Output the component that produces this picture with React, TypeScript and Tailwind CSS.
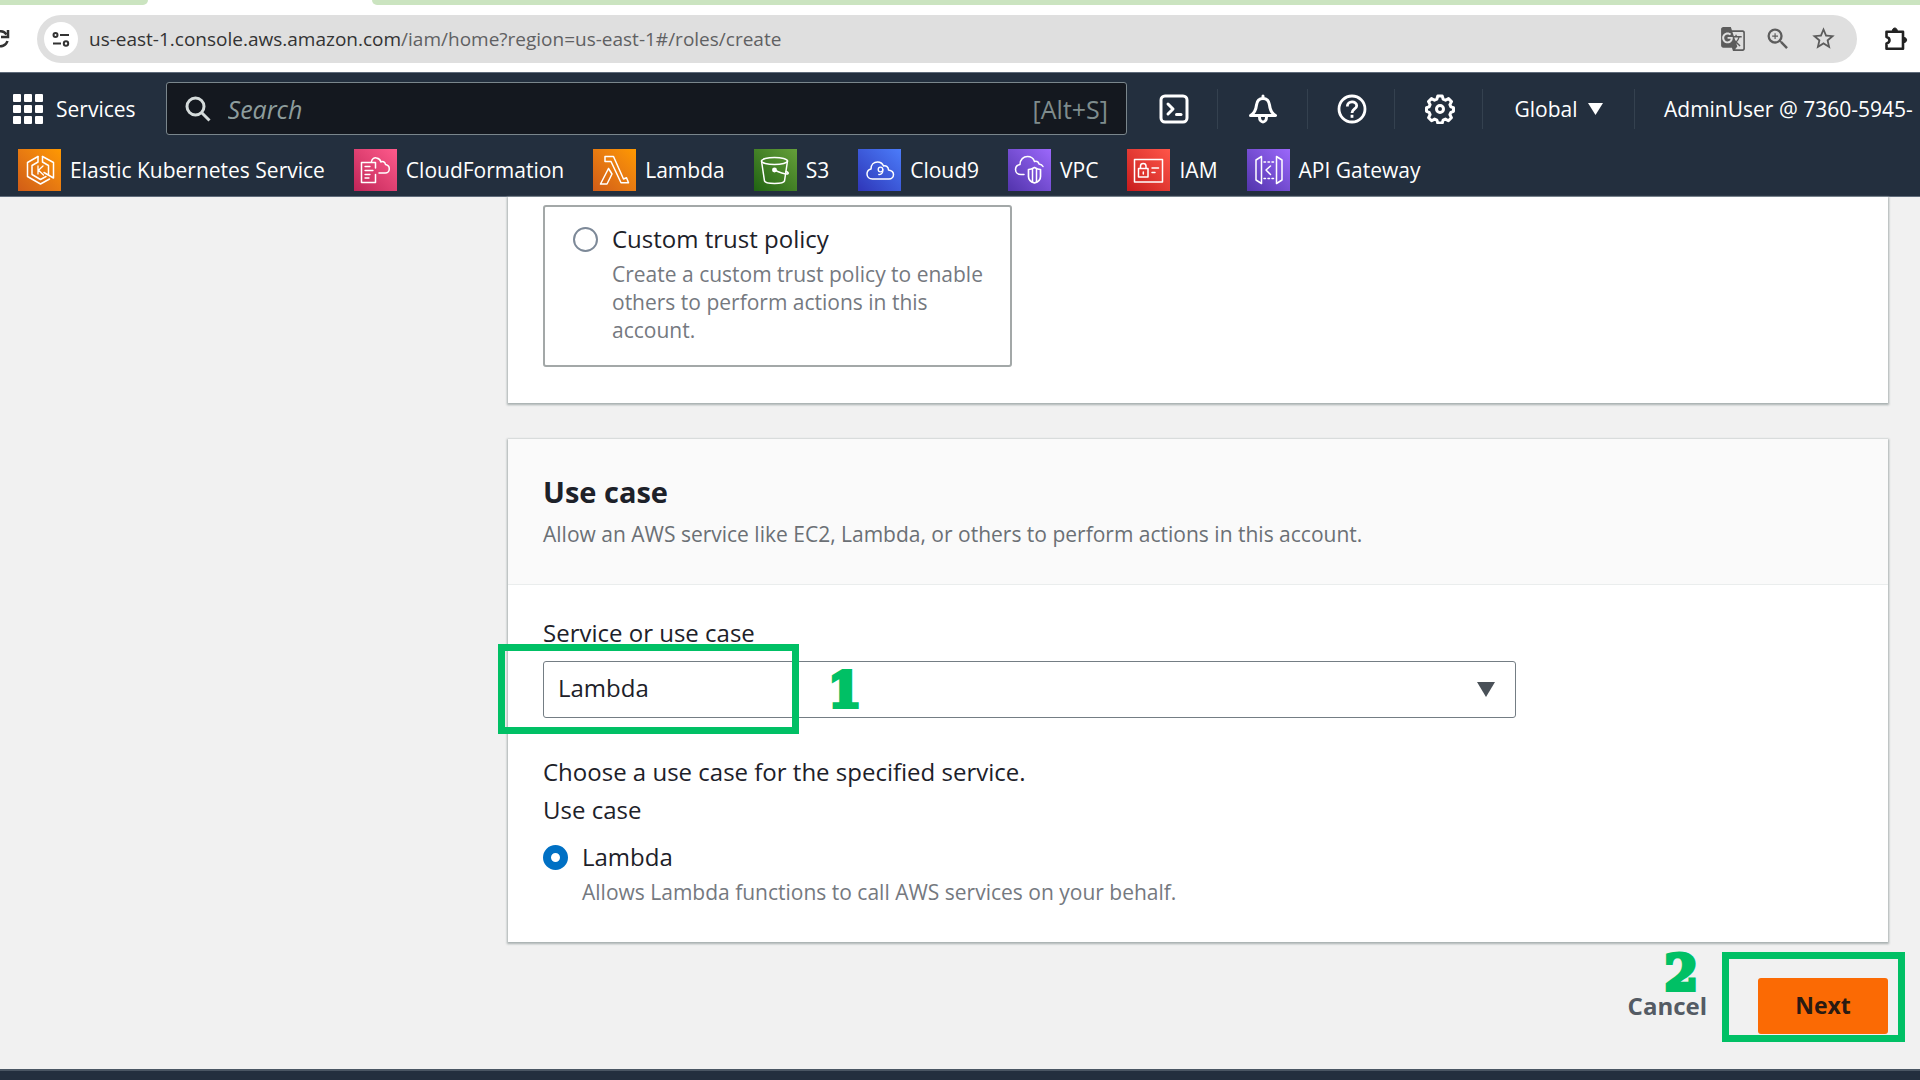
import { useState, type ReactNode } from 'react';
import { MdGTranslate, MdStarOutline, MdZoomIn } from 'react-icons/md';

function Glyph({ children }: { children: ReactNode }) {
  return (
    <svg
      viewBox="0 0 43 42"
      className="h-[42px] w-[43px]"
      fill="none"
      stroke="currentColor"
      strokeWidth="1.5"
      strokeLinejoin="round"
      strokeLinecap="round"
      aria-hidden="true"
    >
      {children}
    </svg>
  );
}

const services = [
  {
    name: 'Elastic Kubernetes Service',
    tile: 'from-[#d05c17] to-[#ff9900]',
    glyph: (
      <>
        <path d="M20 7.500 9.500 13.500v14L22.500 35l9-5" />
        <path d="M24.500 7.500 35.500 13.500v15.500L26 23.500" />
        <path d="M20 7.500v5.500l-6 3.500v9l8.500 5 5.500-3" />
        <path d="M24.500 7.500V13l6 3.500v9.500" />
        <path d="M20 17v8M25 17l-4.500 4.200L25.500 26" strokeWidth="1.300" />
      </>
    ),
  },
  {
    name: 'CloudFormation',
    tile: 'from-[#c02458] to-[#ff5a8c]',
    glyph: (
      <>
        <path d="M7.500 13.500h14v5.500M21.500 25.500v8h-14v-20" />
        <path d="M11 17.500h5M11 21.500h8M11 25.500h5M11 29h4" strokeWidth="1.300" />
        <path d="M17.500 12.500c.5-3 3-4 5-3.500 2.500.5 4 2 4.500 4 1.500-1 4-.5 4.500 2.500 2.500.5 3.800 2 3.800 4.200 0 2.800-2 4.300-4 4.300H25" />
      </>
    ),
  },
  {
    name: 'Lambda',
    tile: 'from-[#d05c17] to-[#ff9900]',
    glyph: (
      <>
        <path d="M12 7.500h8.500l10 22.500 3-1.200 2 5H28L18 12.500h-6z" />
        <path d="M15.500 19.500 7.500 35H14l5-10z" />
      </>
    ),
  },
  {
    name: 'S3',
    tile: 'from-[#1f6412] to-[#659f3a]',
    glyph: (
      <>
        <ellipse cx="20.500" cy="12" rx="13" ry="3.500" />
        <path d="M7.500 12l3 20c.5 1.500 4.500 2.500 10 2.500s9.500-1 10-2.500L33.500 12" />
        <circle cx="20.500" cy="21" r="1.700" fill="currentColor" />
        <path d="M20.500 21c4 2 9 4 13 4 1.500-.5.5-2-1.500-2.500" />
      </>
    ),
  },
  {
    name: 'Cloud9',
    tile: 'from-[#2f35b8] to-[#4c7cfa]',
    glyph: (
      <>
        <path d="M14.500 30c-3.500 0-5.500-2.500-5.500-5s2-4.500 4-5c0-4.500 3-7 6.500-7 3 0 5 1.500 6 4 2-1 5 .5 5 4 3 .5 5 2 5 4.500s-2 4.500-4.500 4.500z" />
        <circle cx="22.500" cy="20.500" r="2.300" strokeWidth="1.300" />
        <path d="M24.800 20.500c.3 3-1 5.300-4 5" strokeWidth="1.300" />
      </>
    ),
  },
  {
    name: 'VPC',
    tile: 'from-[#5234ac] to-[#9c68fb]',
    glyph: (
      <>
        <path d="M16 25.500h-3c-3 0-5.500-2-5.500-5 0-2.500 2-4.500 4.500-5 0-5 3.500-8 7.500-8 3.500 0 6 2 7 5 3-.8 4 .8 4.500 2.500 2 .3 3.500 1.500 4 2.500" />
        <path d="M26.500 18.500c-2.500 1.500-4.500 2-6 2v7c0 3.500 2.500 5.500 6 6.500 3.500-1 6-3 6-6.500v-7c-1.500 0-3.500-.5-6-2z" strokeWidth="1.700" />
        <path d="M24.500 20v13M28.500 20v13" />
      </>
    ),
  },
  {
    name: 'IAM',
    tile: 'from-[#c8191c] to-[#ff5549]',
    glyph: (
      <>
        <path d="M7.500 10.500h28v22.500h-28z" />
        <path d="M11.500 19.500h9.500v8.500h-9.500zM13.500 19.500v-2.500c0-3.500 5.500-3.500 5.500 0v2.500M16.300 23v2" />
        <path d="M25 19h6.500M25 23.500h3" />
      </>
    ),
  },
  {
    name: 'API Gateway',
    tile: 'from-[#5234ac] to-[#9c68fb]',
    glyph: (
      <>
        <path d="M14.500 7.500 9 11v20l5.500 3.500zM29.500 7.500 35 11v20l-5.500 3.500z" />
        <path d="M23.500 17l-4.500 4 4.500 4.500" />
        <path d="M17 13h10.500M17 29.500h10.500" strokeDasharray="1.500 2.500" />
      </>
    ),
  },
];

function ReloadIcon() {
  return (
    <svg viewBox="0 0 20 20" className="-ml-[10px] size-5" fill="none" stroke="#333" strokeWidth="2.500" aria-hidden="true">
      <path d="M16.500 5.500A7.500 7.500 0 1 0 17.500 12" />
      <path d="M18 1v7h-7" />
    </svg>
  );
}

function TuneIcon() {
  return (
    <svg viewBox="0 0 18 18" className="size-[18px]" fill="none" stroke="#333" strokeWidth="2" aria-hidden="true">
      <circle cx="3.500" cy="5" r="2" />
      <path d="M8 5h9M1 13.500h8" />
      <circle cx="14" cy="13.500" r="2.200" />
    </svg>
  );
}

function ExtensionIcon() {
  return (
    <svg viewBox="0 0 24 24" className="size-6" fill="none" stroke="#222" strokeWidth="2.600" strokeLinejoin="round" aria-hidden="true">
      <path d="M2.500 4.800H19v17H2.500v-5.300c4-1 4-5.400 0-6.400z" />
      <path d="M8.300 4c0-4 5-4 5 0zM20 10.500c3.500 0 3.500 5 0 5z" fill="#222" strokeWidth="1" />
    </svg>
  );
}

function CloudShellIcon() {
  return (
    <svg viewBox="0 0 30 30" className="size-[30px]" fill="none" stroke="currentColor" strokeWidth="3" strokeLinejoin="round" strokeLinecap="round" aria-hidden="true">
      <rect x="2" y="2" width="26" height="26" rx="4" />
      <path d="M9 10l5 5-5 5" />
      <path d="M17.500 20.500h4.500" />
    </svg>
  );
}

function BellIcon() {
  return (
    <svg viewBox="0 0 30 30" className="size-[30px]" fill="none" stroke="currentColor" strokeWidth="3" strokeLinejoin="round" strokeLinecap="round" aria-hidden="true">
      <path d="M15 2v2.500M2.500 21.500c4.500-2.500 5.500-6 6-10.500.5-4 3-6.500 6.500-6.500s6 2.500 6.500 6.500c.5 4.500 1.500 8 6 10.500z" />
      <path d="M11.500 23c0 6.500 7 6.500 7 0" />
    </svg>
  );
}

function HelpIcon() {
  return (
    <svg viewBox="0 0 30 30" className="size-[30px]" fill="none" stroke="currentColor" strokeWidth="2.800" aria-hidden="true">
      <circle cx="15" cy="15" r="13" />
      <path d="M10.300 12.500c0-6 9.400-6 9.400-.8 0 3.300-4.700 3.300-4.700 7.300" />
      <path d="M15 20.800v3" />
    </svg>
  );
}

function GearIcon() {
  return (
    <svg viewBox="0 0 30 30" className="size-[30px]" fill="none" stroke="currentColor" strokeWidth="3" strokeLinejoin="round" aria-hidden="true">
      <path d="M12.800 2h4.400l1 3.200 2.300 1 3-1.600 3 3-1.600 3 1 2.300 2.600.8v3.600l-2.600 1-1 2.400 1.500 3-3 3-3-1.600-2.300 1-.9 3h-4.400l-.9-3-2.300-1-3 1.600-3-3 1.500-3-1-2.400-2.600-1v-3.600l2.600-.8 1-2.300-1.600-3 3-3 3 1.600 2.300-1z" />
      <circle cx="15" cy="15" r="3.500" />
    </svg>
  );
}

function SearchIcon() {
  return (
    <svg viewBox="0 0 26 26" className="size-[26px] shrink-0" fill="none" stroke="#d5dbdb" strokeWidth="3" aria-hidden="true">
      <circle cx="10.500" cy="10.500" r="8.500" />
      <path d="M16.500 16.500l8 8" />
    </svg>
  );
}

function Triangle({ className }: { className: string }) {
  return (
    <svg viewBox="0 0 18 15" preserveAspectRatio="none" className={className} fill="currentColor" aria-hidden="true">
      <path d="M0 0h18L9 15z" />
    </svg>
  );
}

const radioBase = 'size-[25px] shrink-0 appearance-none rounded-full bg-white border-2 border-[#7d8998] checked:border-[8px] checked:border-[#0070c4]';
const callout = 'pointer-events-none absolute border-[7px] border-[#00c065]';
const calloutNumber =
  "pointer-events-none absolute font-['DejaVu_Serif',serif] text-5xl leading-[38px] font-bold text-[#00c065] [-webkit-text-stroke:4px_#00c065]";

export default function App() {
  const [trust, setTrust] = useState(false);
  const [useCase, setUseCase] = useState(true);

  return (
    <div className="flex min-h-screen flex-col overflow-hidden bg-[#f1f1f1] font-['Open_Sans','Noto_Sans',sans-serif] text-2xl leading-[30px] text-[#1d2129]">
      <div className="flex h-[5px] bg-white">
        <div className="w-[148px] rounded-br-lg bg-[#cbe4c0]" />
        <div className="w-[224px]" />
        <div className="flex-1 rounded-bl-lg bg-[#cbe4c0]" />
      </div>

      <div className="flex h-[67px] items-center bg-white">
        <button aria-label="Reload">
          <ReloadIcon />
        </button>
        <div className="ml-[27px] flex h-12 flex-1 items-center rounded-full bg-[#dfdfdf] pr-5 pl-[7px]">
          <button aria-label="Site information" className="flex size-[34px] items-center justify-center rounded-full bg-white">
            <TuneIcon />
          </button>
          <div className="ml-[11px] flex-1 text-[19px] text-[#5f6163]">
            <span className="text-[#333]">us-east-1.console.aws.amazon.com</span>
            /iam/home?region=us-east-1#/roles/create
          </div>
          <div className="flex items-center gap-[18px] text-[#5c5c5c]">
            <button aria-label="Translate">
              <MdGTranslate className="size-[26px]" />
            </button>
            <button aria-label="Zoom">
              <MdZoomIn className="size-7" />
            </button>
            <button aria-label="Bookmark">
              <MdStarOutline className="size-[27px]" />
            </button>
          </div>
        </div>
        <button aria-label="Extensions" className="mr-3 ml-[27px]">
          <ExtensionIcon />
        </button>
      </div>

      <header className="border-y border-[#5f6b7a] bg-[#232f3e] pb-[5px] text-[21px] text-white">
        <div className="flex h-[71px] items-center">
          <button className="flex items-center gap-[13px] pl-[13px]">
            <span className="grid grid-cols-3 gap-[3px]">
              {Array.from({ length: 9 }, (_, i) => (
                <span key={i} className="size-2 rounded-[1px] bg-white" />
              ))}
            </span>
            Services
          </button>
          <div className="ml-[30px] flex h-[53px] flex-1 items-center gap-[17px] rounded-[3px] border border-[#7a868c] bg-[#14181f] px-[18px]">
            <SearchIcon />
            <input
              type="text"
              aria-label="Search"
              placeholder="Search"
              className="h-10 min-w-0 flex-1 bg-transparent text-[25px] italic outline-none placeholder:text-[#8d9c9c]"
            />
            <span className="text-[25px] text-[#7f8c8d]">[Alt+S]</span>
          </div>
          <nav aria-label="Account" className="flex h-10 shrink-0 items-center divide-x divide-[#34414f]">
            <button aria-label="CloudShell" className="flex h-full w-[91px] items-center justify-center pl-[3px]">
              <CloudShellIcon />
            </button>
            <button aria-label="Notifications" className="flex h-full w-[90px] items-center justify-center">
              <BellIcon />
            </button>
            <button aria-label="Help" className="flex h-full w-[87px] items-center justify-center pl-[2px]">
              <HelpIcon />
            </button>
            <button aria-label="Settings" className="flex h-full w-[88px] items-center justify-center pl-[2px]">
              <GearIcon />
            </button>
            <button className="flex h-full w-[152px] items-center justify-center gap-[10px]">
              Global
              <Triangle className="h-3 w-[15px]" />
            </button>
            <button className="h-full w-[285px] overflow-hidden pl-[29px] text-left whitespace-nowrap">AdminUser @ 7360-5945-</button>
          </nav>
        </div>
        <nav aria-label="Favorites" className="flex items-center gap-[29px] pt-[5px] pl-[18px]">
          {services.map((s) => (
            <a key={s.name} href="#" className="flex items-center gap-[9px] leading-7 whitespace-nowrap">
              <span className={`bg-linear-to-tr ${s.tile}`}>
                <Glyph>{s.glyph}</Glyph>
              </span>
              {s.name}
            </a>
          ))}
        </nav>
      </header>

      <main className="flex-1 pr-8 pl-[508px]">
        <section className="bg-white px-[35px] pt-2 pb-9 shadow-[0_1px_2px_1px_#a9b1b1]">
          <label className="flex w-[469px] max-w-full gap-[14px] rounded-[3px] border-2 border-[#a3a8a8] py-[17px] pr-4 pl-7">
            <input
              type="radio"
              name="trust"
              checked={trust}
              onChange={() => setTrust(true)}
              className={`${radioBase} mt-[3px]`}
            />
            <span className="pb-1">
              <span className="block">Custom trust policy</span>
              <span className="mt-[6px] block text-[21px] leading-7 text-[#75797f]">
                Create a custom trust policy to enable others to perform actions in this account.
              </span>
            </span>
          </label>
        </section>

        <section className="mt-9 bg-white shadow-[0_1px_2px_1px_#a9b1b1]">
          <div className="border-b border-[#eaeded] bg-[#fafafa] px-[35px] pt-[33px] pb-9">
            <h2 className="text-[29px] leading-10 font-bold">Use case</h2>
            <p className="mt-2 text-[21px] leading-7 text-[#6b7075]">
              Allow an AWS service like EC2, Lambda, or others to perform actions in this account.
            </p>
          </div>
          <div className="px-[35px] pt-[33px] pb-9">
            <label htmlFor="service">Service or use case</label>
            <div className="relative mt-[13px] w-[973px] max-w-full">
              <select id="service" className="h-[57px] w-full appearance-none rounded-[3px] border border-[#747d84] bg-white px-[14px] pb-[3px]">
                <option>Lambda</option>
              </select>
              <Triangle className="pointer-events-none absolute top-[21px] right-[21px] h-[15px] w-[18px] text-[#4a5158]" />
              <div className={`${callout} -top-[17px] -left-[45px] h-[90px] w-[301px]`} />
              <span className={`${calloutNumber} top-[10px] left-[285px]`}>1</span>
            </div>
            <p className="mt-[39px]">Choose a use case for the specified service.</p>
            <p className="mt-2">Use case</p>
            <label className="mt-[17px] flex gap-[14px]">
              <input
                type="radio"
                name="use-case"
                checked={useCase}
                onChange={() => setUseCase(true)}
                className={`${radioBase} mt-[3px]`}
              />
              <span>
                <span className="block">Lambda</span>
                <span className="mt-[6px] block text-[21px] leading-7 text-[#75797f]">
                  Allows Lambda functions to call AWS services on your behalf.
                </span>
              </span>
            </label>
          </div>
        </section>

        <div className="mt-9 mb-[34px] flex items-center justify-end gap-[51px] font-bold">
          <button className="relative leading-7 text-[#545b64]">
            Cancel
            <span className={`${calloutNumber} bottom-7 left-[37px]`}>2</span>
          </button>
          <div className="relative">
            <button className="h-14 w-[130px] rounded-[3px] bg-[#fb6a04] pb-[2px] text-[23px] text-[#2a1a12]">Next</button>
            <div className={`${callout} -top-[26px] -left-9 h-[90px] w-[183px]`} />
          </div>
        </div>
      </main>
      <footer className="h-[11px] border-t-2 border-[#4a5663] bg-[#232f3e]" />
    </div>
  );
}
